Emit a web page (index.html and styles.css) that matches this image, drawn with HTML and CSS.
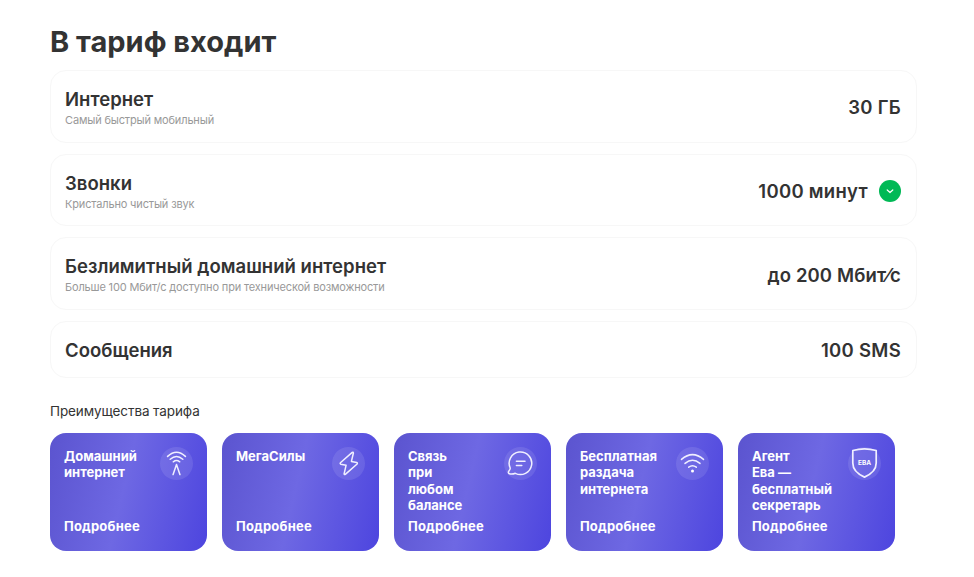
FILE: index.html
```html
<!DOCTYPE html>
<html lang="ru">
<head>
<meta charset="utf-8">
<title>В тариф входит</title>
<link rel="stylesheet" href="styles.css">
</head>
<body>
<main class="tariff">
  <h1 class="title">В тариф входит</h1>
  <section class="options">
    <div class="option">
      <div>
        <h2 class="option-name">Интернет</h2>
        <p class="option-note">Самый быстрый мобильный</p>
      </div>
      <div class="option-value">30 ГБ</div>
    </div>
    <div class="option">
      <div>
        <h2 class="option-name">Звонки</h2>
        <p class="option-note">Кристально чистый звук</p>
      </div>
      <div class="option-value"><span>1000 минут</span>
        <svg class="toggle" viewBox="0 0 22 22"><circle cx="11" cy="11" r="11" fill="#00b956"/><path d="M8.2 10l2.8 2.5 2.8-2.5" fill="none" stroke="#fff" stroke-width="1.2" stroke-linecap="round" stroke-linejoin="round"/></svg>
      </div>
    </div>
    <div class="option">
      <div>
        <h2 class="option-name">Безлимитный домашний интернет</h2>
        <p class="option-note">Больше 100 Мбит/с доступно при технической возможности</p>
      </div>
      <div class="option-value speed">до 200 Мбит⁄с</div>
    </div>
    <div class="option option-short">
      <h2 class="option-name">Сообщения</h2>
      <div class="option-value">100 SMS</div>
    </div>
  </section>
  <p class="subtitle">Преимущества тарифа</p>
  <section class="cards">
    <article class="card">
      <div class="card-top"><h3 class="card-name">Домашний<br>интернет</h3>
        <svg class="icon" viewBox="0 0 33 33"><circle cx="16.5" cy="16.5" r="16.5"/><path d="M7.6 9.4q8.9-8.4 17.8 0M10.2 12.3q6.3-5.6 12.6 0M13.3 14.8q3.2-2.4 6.4 0M13.1 27.6l3.4-10.2 3.4 10.2"/></svg>
      </div>
      <a class="more">Подробнее</a>
    </article>
    <article class="card">
      <div class="card-top"><h3 class="card-name">МегаСилы</h3>
        <svg class="icon" viewBox="0 0 33 33"><circle cx="16.5" cy="16.5" r="16.5"/><path d="M20.2 5.4L8.4 15.8q-.6 1 .4 1.4l5.3 1-2 8.6q.2 1.2 1.2.6l11.8-10.4q.7-1.2-.4-1.6l-5.3-1L21.4 6q-.2-1.2-1.2-.6z"/></svg>
      </div>
      <a class="more">Подробнее</a>
    </article>
    <article class="card">
      <div class="card-top"><h3 class="card-name">Связь<br>при<br>любом<br>балансе</h3>
        <svg class="icon" viewBox="0 0 33 33"><circle cx="16.5" cy="16.5" r="16.5"/><path d="M11.3 26.3A11.3 11.3 0 1 0 6.2 21q.2 1.4-1.3 3-1.3 1.8.5 2.8 3 .8 5.9-.5zM12.4 14.2h8.6M12.4 18.4h5.4"/></svg>
      </div>
      <a class="more">Подробнее</a>
    </article>
    <article class="card">
      <div class="card-top"><h3 class="card-name">Бесплатная<br>раздача<br>интернета</h3>
        <svg class="icon" viewBox="0 0 33 33"><circle cx="16.5" cy="16.5" r="16.5"/><path d="M5.5 12.4q11-9.6 22 0M9 16.4q7.5-6.4 15 0M12.7 20.2q3.8-3 7.6 0"/><circle class="dot" cx="16.5" cy="24" r="1.5"/></svg>
      </div>
      <a class="more">Подробнее</a>
    </article>
    <article class="card">
      <div class="card-top"><h3 class="card-name">Агент<br>Ева —<br>бесплатный<br>секретарь</h3>
        <svg class="icon" viewBox="0 0 33 33"><circle cx="16.5" cy="16.5" r="16.5"/><path class="shield" d="M4.8 3.5q11.7-3.2 23.4 0v12.6q0 9-11.7 14Q4.8 25.1 4.8 16.1z"/><text x="16.5" y="18" text-anchor="middle">EBA</text></svg>
      </div>
      <a class="more">Подробнее</a>
    </article>
  </section>
</main>
</body>
</html>
```
FILE: styles.css
```css
* { box-sizing: border-box; margin: 0; padding: 0; }
body { background: #fff; color: #333; font-family: Inter, "Liberation Sans", sans-serif; overflow: hidden; }
.tariff { width: 867px; margin-left: 50px; padding-top: 24px; }
.title { font-size: 29px; line-height: 36px; font-weight: 700; white-space: nowrap; }
.options { display: flex; flex-direction: column; gap: 11px; margin-top: 10px; }
.option { display: flex; justify-content: space-between; align-items: center; height: 72.7px; padding: 2px 15px 0 14px; border: 1px solid #f7f7f7; border-radius: 16px; }
.option-short { height: 57px; padding-top: 1px; }
.option-name { font-size: 18.5px; line-height: 24px; font-weight: 600; letter-spacing: .03px; white-space: nowrap; }
.option-note { margin-top: 1px; font-size: 11px; line-height: 16px; letter-spacing: -.16px; color: #999; white-space: nowrap; }
.option-value { display: flex; align-items: center; gap: 11px; font-size: 18.5px; line-height: 24px; font-weight: 600; letter-spacing: .28px; }
.speed { letter-spacing: .12px; }
.toggle { width: 22px; height: 22px; margin-top: -1px; }
.subtitle { margin-top: 23px; font-size: 13.5px; line-height: 20px; letter-spacing: -.1px; }
.cards { display: flex; gap: 14.7px; margin-top: 11.5px; }
.card { display: flex; flex-direction: column; justify-content: space-between; width: 157.3px; height: 118px; padding: 15px 14px 16px 14px; border-radius: 16px; color: #fff; background: linear-gradient(103deg, #5b54cf 0%, #6e68e3 47%, #4d45df 100%); }
.card-top { display: flex; justify-content: space-between; height: 66px; }
.card-name { font-size: 13px; line-height: 16.5px; font-weight: 700; white-space: nowrap; }
.icon { flex: none; width: 33px; height: 33px; margin-top: -1px; fill: none; stroke: #f0efff; stroke-width: 1.5; stroke-linecap: round; stroke-linejoin: round; }
.icon circle { fill: #fff; fill-opacity: .1; stroke: none; }
.icon .dot { fill-opacity: 1; }
.icon .shield { stroke-width: 1.7; }
.icon text { fill: #fff; stroke: none; font-size: 6.5px; font-weight: 700; }
.more { font-size: 13px; line-height: 17px; font-weight: 700; letter-spacing: .2px; }
```
